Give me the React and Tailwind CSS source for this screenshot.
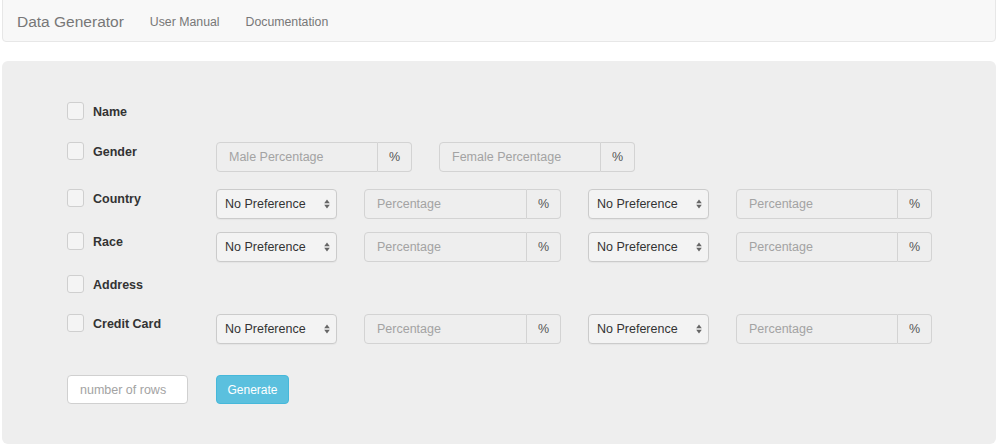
import React from 'react';

const font = { fontFamily: '"Liberation Sans", Arial, Helvetica, sans-serif' };

const SelectBox = () => (
  <div className="relative w-[121px] h-[30px]">
    <select className="appearance-none w-full h-full rounded-[4px] border border-[#cbcbcb] bg-[#f3f3f3] pl-[8px] text-[12.5px] text-[#333] shadow-[0_1px_1px_rgba(0,0,0,0.04)] outline-none">
      <option>No Preference</option>
    </select>
    <svg className="absolute right-[7px] top-1/2 -translate-y-1/2 pointer-events-none" width="6" height="10" viewBox="0 0 6 10">
      <path d="M3 0.5L5.8 4.2H0.2z M3 9.5L0.2 5.8H5.8z" fill="#666" />
    </svg>
  </div>
);

const PercentGroup = ({ placeholder = 'Percentage', width = 'w-[196px]' }) => (
  <div className={`flex h-[30px] ${width}`}>
    <input
      disabled
      placeholder={placeholder}
      className="flex-1 min-w-0 rounded-l-[4px] border border-[#d3d3d3] bg-[#eeeeee] px-[12px] text-[12.5px] placeholder:text-[#a3a3a3] outline-none"
    />
    <span className="w-[34px] flex items-center justify-center rounded-r-[4px] border border-l-0 border-[#d3d3d3] bg-[#eeeeee] text-[12.5px] text-[#555]">
      %
    </span>
  </div>
);

const FieldRow = ({ label, height, children }) => (
  <div className={`flex items-start ${height}`}>
    <div className="w-[149px] flex items-start gap-[9px]">
      <input
        type="checkbox"
        className="appearance-none w-[17px] h-[18px] rounded-[3px] border border-[#cfcfcf] bg-[#f4f4f4] shrink-0"
      />
      <span className="text-[12.5px] leading-[20px] font-bold text-[#333]">{label}</span>
    </div>
    {children && <div className="flex gap-[27px]">{children}</div>}
  </div>
);

const FourControls = () => (
  <>
    <SelectBox />
    <PercentGroup width="w-[197px]" />
    <SelectBox />
    <PercentGroup />
  </>
);

export default function App() {
  return (
    <div className="w-[998px] h-[448px] overflow-hidden bg-white text-[#333]" style={font}>
      <nav className="mx-[2px] -mt-[8px] h-[50px] rounded-[4px] border border-[#e7e7e7] bg-[#f8f8f8] flex items-center pt-[10px] pl-[14px]">
        <span className="text-[15.5px] text-[#777]">Data Generator</span>
        <div className="flex gap-[26px] ml-[26px] text-[12.3px] text-[#777]">
          <span>User Manual</span>
          <span>Documentation</span>
        </div>
      </nav>

      <div className="mx-[2px] mt-[19px] rounded-[6px] bg-[#eeeeee] pt-[41px] pl-[65px] pb-[40px]">
        <FieldRow label="Name" height="h-[40px]" />
        <FieldRow label="Gender" height="h-[47px]">
          <PercentGroup placeholder="Male Percentage" />
          <PercentGroup placeholder="Female Percentage" />
        </FieldRow>
        <FieldRow label="Country" height="h-[43px]">
          <FourControls />
        </FieldRow>
        <FieldRow label="Race" height="h-[43px]">
          <FourControls />
        </FieldRow>
        <FieldRow label="Address" height="h-[39px]" />
        <FieldRow label="Credit Card" height="h-[61px]">
          <FourControls />
        </FieldRow>

        <div className="flex items-center">
          <div className="w-[149px]">
            <input
              placeholder="number of rows"
              className="w-[121px] h-[29px] rounded-[4px] border border-[#d0d0d0] bg-white px-[12px] text-[12.5px] placeholder:text-[#a3a3a3] outline-none"
            />
          </div>
          <button className="w-[73px] h-[29px] rounded-[4px] border border-[#46b8da] bg-[#5bc0de] text-[12px] text-white">
            Generate
          </button>
        </div>
      </div>
    </div>
  );
}
